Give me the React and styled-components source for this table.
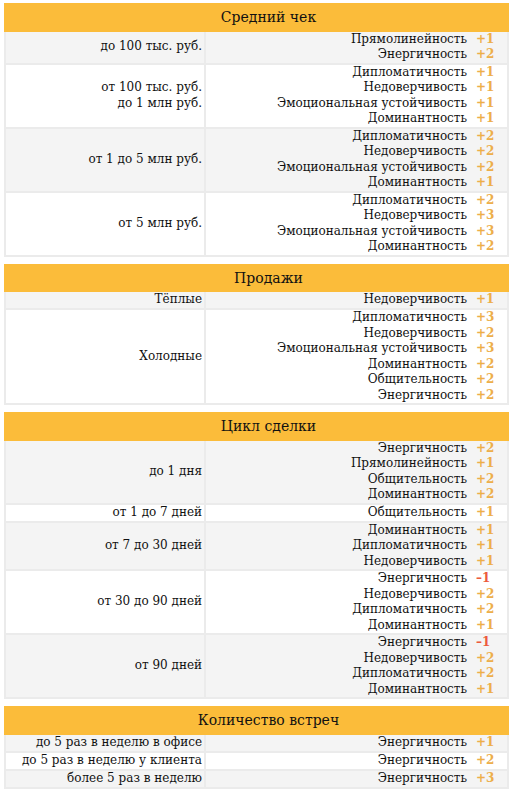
import React from "react";
import styled, {createGlobalStyle} from "styled-components";

const GlobalStyle = createGlobalStyle`
  body {
    margin: 0;
    background: #ffffff;
    font-family: "DejaVu Serif", "Liberation Serif", serif;
    color: #111111;
  }
`

const Page = styled.div`
  display: flex;
  flex-direction: column;
  gap: 7px;
  padding: 3px 5px 0 4px;
`

const Section = styled.div`
  display: flex;
  flex-direction: column;
  border: 2px solid #ebebeb;
  border-top: none;
`

const Header = styled.div`
  background: #fbbc3a;
  margin: 0 -2px;
  height: 28.5px;
  display: flex;
  align-items: center;
  justify-content: center;
  padding-left: 24px;
  font-size: 14px;
`

const Row = styled.div`
  display: flex;
  min-height: 16px;
  background: ${props => props.$shaded ? "#f4f4f4" : "#ffffff"};
  border-top: ${props => props.$first ? "none" : "2px solid #ebebeb"};
`

const Label = styled.div`
  width: 200px;
  flex-shrink: 0;
  border-right: 2px solid #ebebeb;
  display: flex;
  flex-direction: column;
  justify-content: center;
  align-items: flex-end;
  text-align: right;
  padding-right: 2px;
  box-sizing: border-box;
  font-size: 12px;
  line-height: 15.5px;
`

const Traits = styled.div`
  flex: 1;
  display: flex;
  flex-direction: column;
  justify-content: center;
  font-size: 12px;
  line-height: 15.5px;
`

const Trait = styled.div`
  display: flex;
  justify-content: flex-end;
`

const Score = styled.span`
  width: 40px;
  padding-left: 9px;
  box-sizing: border-box;
  font-weight: bold;
  color: ${props => props.$negative ? "#ec5a3c" : "#edae4a"};
`

const sections = [
    {
        title: "Средний чек",
        rows: [
            {label: ["до 100 тыс. руб."], traits: [["Прямолинейность", 1], ["Энергичность", 2]]},
            {label: ["от 100 тыс. руб.", "до 1 млн руб."], traits: [["Дипломатичность", 1], ["Недоверчивость", 1], ["Эмоциональная устойчивость", 1], ["Доминантность", 1]]},
            {label: ["от 1 до 5 млн руб."], traits: [["Дипломатичность", 2], ["Недоверчивость", 2], ["Эмоциональная устойчивость", 2], ["Доминантность", 1]]},
            {label: ["от 5 млн руб."], traits: [["Дипломатичность", 2], ["Недоверчивость", 3], ["Эмоциональная устойчивость", 3], ["Доминантность", 2]]},
        ]
    },
    {
        title: "Продажи",
        rows: [
            {label: ["Тёплые"], traits: [["Недоверчивость", 1]]},
            {label: ["Холодные"], traits: [["Дипломатичность", 3], ["Недоверчивость", 2], ["Эмоциональная устойчивость", 3], ["Доминантность", 2], ["Общительность", 2], ["Энергичность", 2]]},
        ]
    },
    {
        title: "Цикл сделки",
        rows: [
            {label: ["до 1 дня"], traits: [["Энергичность", 2], ["Прямолинейность", 1], ["Общительность", 2], ["Доминантность", 2]]},
            {label: ["от 1 до 7 дней"], traits: [["Общительность", 1]]},
            {label: ["от 7 до 30 дней"], traits: [["Доминантность", 1], ["Дипломатичность", 1], ["Недоверчивость", 1]]},
            {label: ["от 30 до 90 дней"], traits: [["Энергичность", -1], ["Недоверчивость", 2], ["Дипломатичность", 2], ["Доминантность", 1]]},
            {label: ["от 90 дней"], traits: [["Энергичность", -1], ["Недоверчивость", 2], ["Дипломатичность", 2], ["Доминантность", 1]]},
        ]
    },
    {
        title: "Количество встреч",
        rows: [
            {label: ["до 5 раз в неделю в офисе"], traits: [["Энергичность", 1]]},
            {label: ["до 5 раз в неделю у клиента"], traits: [["Энергичность", 2]]},
            {label: ["более 5 раз в неделю"], traits: [["Энергичность", 3]]},
        ]
    },
]

const formatScore = value => value < 0 ? `–${Math.abs(value)}` : `+${value}`

const App = () => {
    return (
        <Page>
            <GlobalStyle/>
            {sections.map(section => (
                <Section key={section.title}>
                    <Header>{section.title}</Header>
                    {section.rows.map((row, i) => (
                        <Row key={i} $first={i === 0} $shaded={i % 2 === 0}>
                            <Label>
                                {row.label.map(line => <div key={line}>{line}</div>)}
                            </Label>
                            <Traits>
                                {row.traits.map(([name, value]) => (
                                    <Trait key={name}>
                                        <span>{name}</span>
                                        <Score $negative={value < 0}>{formatScore(value)}</Score>
                                    </Trait>
                                ))}
                            </Traits>
                        </Row>
                    ))}
                </Section>
            ))}
        </Page>
    );
}

export default App;
